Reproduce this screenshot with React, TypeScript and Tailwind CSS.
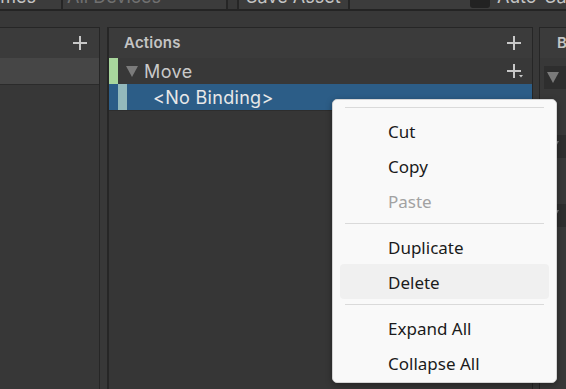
import React from 'react';

const PlusIcon = ({ dropdown = false }: { dropdown?: boolean }) => (
  <svg width="17" height="17" viewBox="0 0 17 17" className="shrink-0">
    <rect x="7" y="1" width="2" height="14" fill="#c8c8c8" />
    <rect x="1" y="7" width="14" height="2" fill="#c8c8c8" />
    {dropdown && <path d="M13 12 L17 12 L15 14.5 Z" fill="#c8c8c8" />}
  </svg>
);

const Foldout = () => (
  <svg width="12" height="11" viewBox="0 0 12 11" className="shrink-0">
    <path d="M0 0 L12 0 L6 11 Z" fill="#7b7b7b" />
  </svg>
);

function ContextMenu() {
  const Sep = () => (
    <div className="h-[11px] flex items-center px-[12px]">
      <div className="h-px w-full bg-[#dadada]" />
    </div>
  );
  const Item = ({ label, disabled = false, active = false }: { label: string; disabled?: boolean; active?: boolean }) => (
    <div className={`h-[35px] mx-[7px] rounded-[4px] flex items-center pl-[48px] pt-[3px] text-[17px] ${active ? 'bg-[#f0f0f0]' : ''} ${disabled ? 'text-[#a2a2a2]' : 'text-[#1b1b1b]'}`}>
      {label}
    </div>
  );
  return (
    <div className="absolute left-[332px] top-[99px] w-[225px] rounded-[5px] border border-[#d4d4d4] bg-[#f9f9f9] py-[2px] shadow-[0_2px_6px_rgba(0,0,0,0.35)] font-['Noto_Sans','Open_Sans',sans-serif]">
      <Sep />
      <Item label="Cut" />
      <Item label="Copy" />
      <Item label="Paste" disabled />
      <Sep />
      <Item label="Duplicate" />
      <Item label="Delete" active />
      <Sep />
      <Item label="Expand All" />
      <Item label="Collapse All" />
    </div>
  );
}

export default function App() {
  return (
    <div className="relative w-[566px] h-[389px] overflow-hidden bg-[#383838] font-['Inter','Liberation_Sans',sans-serif] flex flex-col">
      {/* Toolbar, mostly scrolled out of view */}
      <div className="mt-[-12px] h-[23px] shrink-0 flex overflow-hidden border-b-2 border-[#242424] bg-[#3c3c3c] text-[18px] leading-[17px] text-[#c4c4c4] whitespace-nowrap">
        <div className="w-[63px] shrink-0 border-r-2 border-[#262626] flex justify-end pr-[25px] overflow-hidden">Schemes</div>
        <div className="w-[165px] shrink-0 border-r-2 border-[#262626] pl-[4px] text-[#707070]">All Devices</div>
        <div className="w-[9px] shrink-0 bg-[#383838]" />
        <div className="w-[113px] shrink-0 border-l-2 border-r-2 border-[#262626] pl-[7px]">Save Asset</div>
        <div className="shrink-0 flex pl-[120px] gap-[7px]">
          <div className="w-[20px] h-[16px] rounded-[3px] bg-[#222222] mt-[4px]" />
          <span>Auto-Save</span>
        </div>
      </div>
      <div className="h-[16px] shrink-0" />

      {/* Panels */}
      <div className="flex flex-1 min-h-0">
        {/* Action Maps */}
        <div className="w-[100px] shrink-0 flex flex-col border-t border-r border-[#262626] bg-[#373737]">
          <div className="h-[30px] shrink-0 bg-[#3b3b3b] flex items-center justify-end pr-[10px]">
            <PlusIcon />
          </div>
          <div className="h-[27px] shrink-0 bg-[#464646] border-b border-[#2b2b2b]" />
        </div>

        <div className="w-[7px] shrink-0" />

        {/* Actions */}
        <div className="w-[426px] shrink-0 flex flex-col border-t border-l-2 border-r border-[#262626] bg-[#363636]">
          <div className="h-[30px] shrink-0 bg-[#3b3b3b] flex items-center justify-between pl-[15px] pr-[9px]">
            <span className="text-[15px] font-semibold text-[#c4c4c4] tracking-[0.2px]">Actions</span>
            <PlusIcon />
          </div>
          <div className="h-[26px] shrink-0 bg-[#383838] flex items-center">
            <div className="w-[9px] h-full bg-[#a8d69c]" />
            <div className="ml-[8px]"><Foldout /></div>
            <span className="ml-[6px] text-[18px] tracking-[0.4px] text-[#c9c9c9]">Move</span>
            <div className="ml-auto mr-[9px]"><PlusIcon dropdown /></div>
          </div>
          <div className="h-[27px] shrink-0 bg-[#2c5d87] flex items-center border-b border-[#2d2d2d]">
            <div className="w-[9px] h-full" />
            <div className="w-[9px] h-full bg-[#93b9bc]" />
            <span className="ml-[26px] text-[18px] tracking-[0.3px] text-[#e8e8e8]">&lt;No Binding&gt;</span>
          </div>
        </div>

        <div className="w-[6px] shrink-0" />

        {/* Binding Properties */}
        <div className="flex-1 flex flex-col border-t border-l border-[#262626] bg-[#383838]">
          <div className="h-[30px] shrink-0 bg-[#3b3b3b] flex items-center pl-[17px] whitespace-nowrap">
            <span className="text-[15px] font-semibold text-[#c4c4c4]">Binding Properties</span>
          </div>
          <div className="flex flex-col pl-[4px] pt-[8px] gap-[46px]">
            <div className="h-[23px] bg-[#2e2e2e] flex items-center pl-[3px]"><Foldout /></div>
            <div className="h-[23px] bg-[#2e2e2e] flex items-center pl-[3px]"><Foldout /></div>
            <div className="h-[23px] bg-[#2e2e2e] flex items-center pl-[3px]"><Foldout /></div>
          </div>
        </div>
      </div>

      <ContextMenu />
    </div>
  );
}
